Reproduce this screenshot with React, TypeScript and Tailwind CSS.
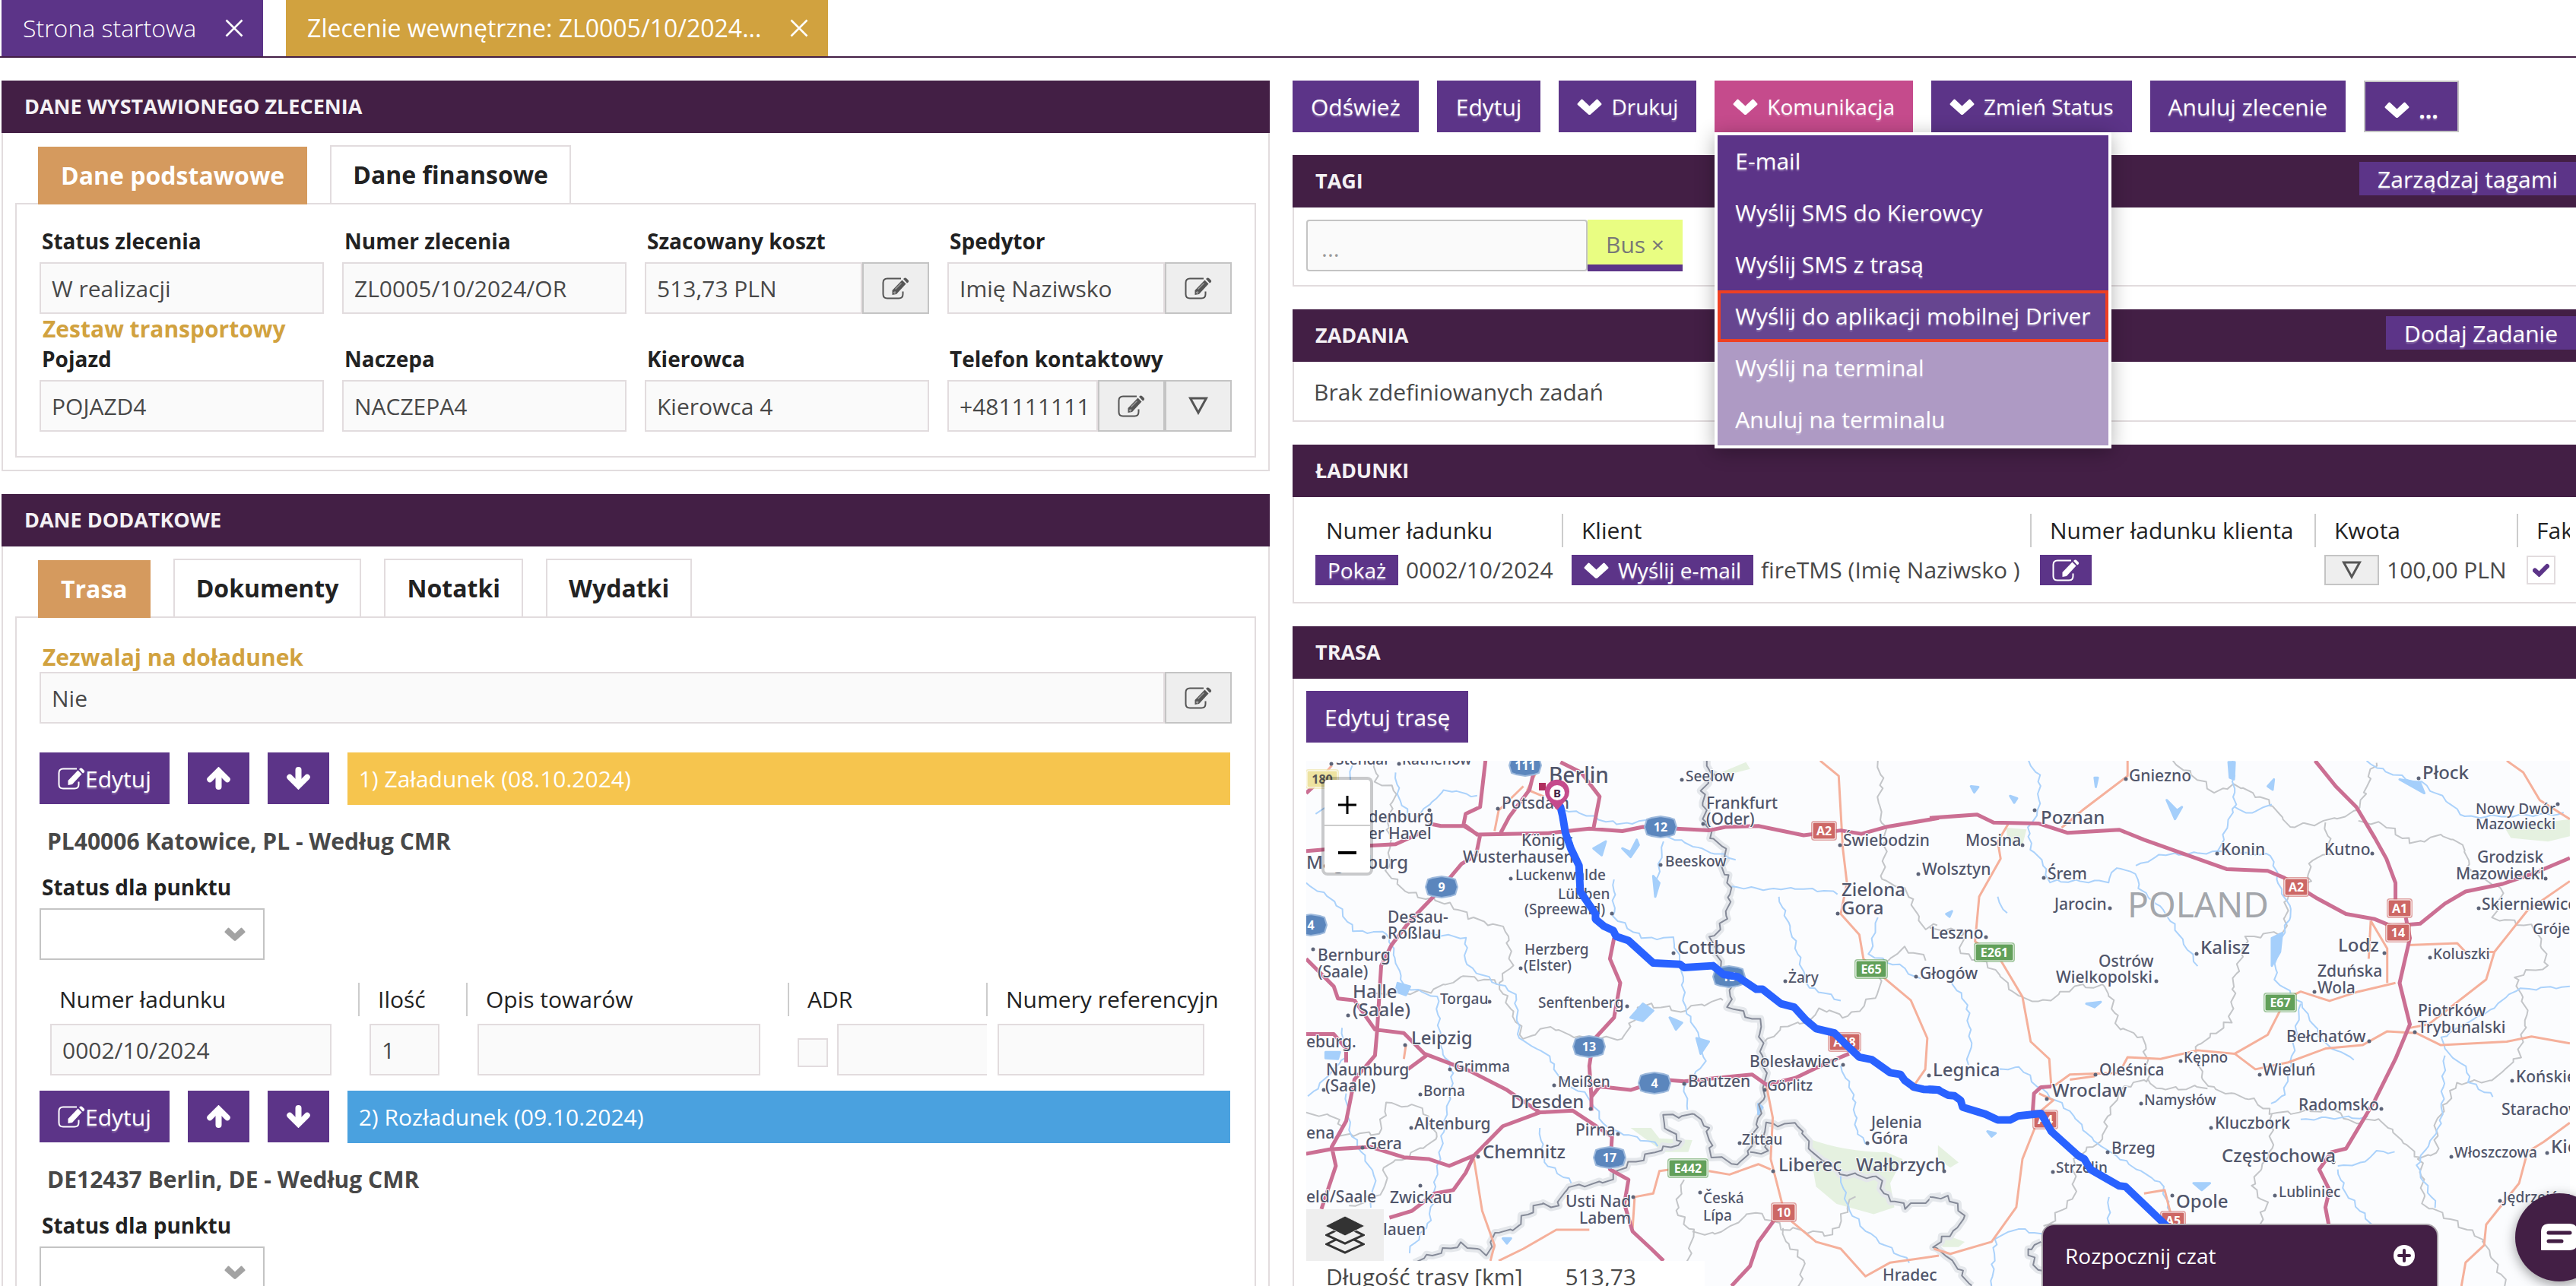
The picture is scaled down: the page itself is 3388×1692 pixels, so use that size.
import React from "react";
import clsx from "clsx";

type Point = [number, number];

/* ---------- icons ---------- */

function EditIcon({ className }: { className?: string }) {
  return (
    <svg viewBox="0 0 36 29" className={clsx("h-[29px] w-9 shrink-0", className)} fill="none" stroke="currentColor">
      <path d="M25 1.5H7Q1.5 1.5 1.5 7V22Q1.5 27.5 7 27.5H22Q27.500 27.500 27.500 22V18.500" strokeWidth="2" />
      <path d="M13.500 23V17L26.500 3.500L31.500 8.500L19 22Z" fill="currentColor" stroke="none" />
      <path d="M28 2L29.500 0.800Q31 0 32.500 1.500L34.500 3.500Q36 5 34.500 6.500L33 7.500Z" fill="currentColor" stroke="none" />
      <path d="M17.500 15.500L25.500 7.500M15 19.500L17.500 21.500" className="stroke-white/40" strokeWidth="1.500" />
      <circle cx="17" cy="19.500" r="1.500" className="fill-white/30" stroke="none" />
    </svg>
  );
}

function ChevronIcon({ className }: { className?: string }) {
  return (
    <svg viewBox="0 0 33 21" className={clsx("shrink-0", className)} fill="currentColor">
      <path d="M1 6L5.500 1Q6.500 0 7.500 1L16.500 9.500L25.500 1Q26.500 0 27.500 1L32 6Q33 7 32 8L18 20.500Q16.500 21.500 15 20.500L1 8Q0 7 1 6Z" />
    </svg>
  );
}

function ArrowIcon({ down }: { down?: boolean }) {
  return (
    <svg viewBox="0 0 31 30" className={clsx("h-[30px] w-[31px]", down && "rotate-180")} fill="none" stroke="currentColor">
      <path d="M4 16.500L15.500 5L27 16.500" strokeWidth="7.500" strokeLinecap="round" />
      <path d="M15.500 7V26" strokeWidth="8" strokeLinecap="round" />
    </svg>
  );
}

function TriangleIcon() {
  return (
    <svg viewBox="0 0 26 24" className="h-6 w-[26px]" fill="none" stroke="currentColor">
      <path d="M2.500 2H23.500L13 21Z" strokeWidth="3" />
    </svg>
  );
}

function CloseIcon() {
  return (
    <svg viewBox="0 0 24 24" className="h-6 w-6" fill="none" stroke="currentColor">
      <path d="M1.500 1.500L22.500 22.500M22.500 1.500L1.500 22.500" strokeWidth="2.500" />
    </svg>
  );
}

function LayersIcon() {
  return (
    <svg viewBox="0 0 52 50" className="h-[50px] w-[52px]">
      <path d="M26 25L2 37L26 48L50 37Z" fill="#eee" stroke="#333" strokeWidth="3" />
      <path d="M26 13L2 25L26 36L50 25Z" fill="#eee" stroke="#333" strokeWidth="3" />
      <path d="M26 0L0 13L26 26L52 13Z" fill="#333" stroke="#eee" strokeWidth="1" />
    </svg>
  );
}

/* ---------- small building blocks ---------- */

const shadow = "[text-shadow:0_2px_2px_rgba(255,255,255,0.3)]";

function PurpleButton({ children, className }: { children: React.ReactNode; className?: string }) {
  return (
    <button type="button" className={clsx("flex shrink-0 items-center whitespace-nowrap bg-[#5c3488] text-white", shadow, className)}>
      {children}
    </button>
  );
}

function GreyButton({ children, label, className }: { children: React.ReactNode; label: string; className?: string }) {
  return (
    <button
      type="button"
      aria-label={label}
      className={clsx("flex shrink-0 items-center justify-center border-2 border-[#c4c4c4] bg-[#eee] text-[#555]", className)}
    >
      {children}
    </button>
  );
}

const inputStyle = "h-[68px] min-w-0 rounded-none border-2 border-[#e2dcde] bg-[#fafafa] px-[14px] text-[30px] text-[#484848]";

function Field({ id, label, value, edit, more }: { id: string; label: string; value: string; edit?: boolean; more?: boolean }) {
  return (
    <div className="min-w-0">
      <label htmlFor={id} className="block pl-[3px] text-[28px] leading-10 font-bold text-[#222]">
        {label}
      </label>
      <div className="mt-2 flex">
        <input id={id} readOnly defaultValue={value} className={clsx(inputStyle, "w-full flex-1")} />
        {edit && (
          <GreyButton label={"Edytuj " + label} className="w-[88px]">
            <EditIcon />
          </GreyButton>
        )}
        {more && (
          <GreyButton label="Więcej" className="w-[88px]">
            <TriangleIcon />
          </GreyButton>
        )}
      </div>
    </div>
  );
}

function PanelHeader({ title, action }: { title: string; action?: string }) {
  return (
    <div className="flex h-[69px] items-center justify-between bg-[#431f45] pl-[30px]">
      <h2 className="text-[27px] font-bold text-[#f4f1f4]">{title}</h2>
      {action && <PurpleButton className="mb-[7px] h-[44px] pr-6 pl-6 text-[30px]">{action}</PurpleButton>}
    </div>
  );
}

function TabbedPanel({ title, tabs, children }: { title: string; tabs: string[]; children: React.ReactNode }) {
  return (
    <section>
      <PanelHeader title={title} />
      <div className="border-2 border-t-0 border-[#e2dcde] px-4 py-4">
        <div role="tablist" className="flex items-start gap-[30px] px-[30px]">
          {tabs.map((tab, i) => (
            <button
              key={tab}
              type="button"
              role="tab"
              aria-selected={i === 0}
              className={clsx(
                "h-[76px] text-[32px] font-bold whitespace-nowrap",
                i === 0 ? "z-10 mt-[2px] -mb-[2px] bg-[#d59a5e] px-[30px] text-white" : "border-2 border-b-0 border-[#e2dcde] bg-white px-7 text-[#222]"
              )}
            >
              {tab}
            </button>
          ))}
        </div>
        <div className="border-2 border-[#e2dcde] px-[30px] pb-8">{children}</div>
      </div>
    </section>
  );
}

function RoutePoint({ id, title, color, address }: { id: string; title: string; color: string; address: string }) {
  return (
    <div>
      <div className="flex gap-6 pr-[2px]">
        <PurpleButton className="h-[68px] px-6 text-[30px]">
          <EditIcon />
          Edytuj
        </PurpleButton>
        <PurpleButton className="h-[68px] w-[81px] justify-center">
          <ArrowIcon />
        </PurpleButton>
        <PurpleButton className="h-[68px] w-[81px] justify-center">
          <ArrowIcon down />
        </PurpleButton>
        <div className={clsx("flex h-[69px] flex-1 items-center px-[15px] text-[30px] text-white", color)}>{title}</div>
      </div>
      <p className="mt-7 pl-[10px] text-[30px] leading-10 font-bold text-[#484848]">{address}</p>
      <label htmlFor={id} className="mt-5 block pl-[3px] text-[28px] leading-10 font-bold text-[#222]">
        Status dla punktu
      </label>
      <div className="mt-2 grid w-[296px] items-center">
        <select id={id} className="col-start-1 row-start-1 h-[68px] appearance-none border-2 border-[#c4c4c4] bg-white px-4 text-[30px]">
          <option></option>
        </select>
        <ChevronIcon className="pointer-events-none col-start-1 row-start-1 mr-[25px] h-[18px] w-7 justify-self-end text-[#a3a3a3]" />
      </div>
    </div>
  );
}

/* ---------- left column ---------- */

function OrderData() {
  return (
    <TabbedPanel title="DANE WYSTAWIONEGO ZLECENIA" tabs={["Dane podstawowe", "Dane finansowe"]}>
      <div className="grid grid-cols-4 gap-x-6 pt-7">
        <Field id="status" label="Status zlecenia" value="W realizacji" />
        <Field id="number" label="Numer zlecenia" value="ZL0005/10/2024/OR" />
        <Field id="cost" label="Szacowany koszt" value="513,73 PLN" edit />
        <Field id="forwarder" label="Spedytor" value="Imię Naziwsko" edit />
        <h3 className="col-span-4 pl-1 text-[30px] leading-[39px] font-bold text-[#d1a23f]">Zestaw transportowy</h3>
        <Field id="vehicle" label="Pojazd" value="POJAZD4" />
        <Field id="trailer" label="Naczepa" value="NACZEPA4" />
        <Field id="driver" label="Kierowca" value="Kierowca 4" />
        <Field id="phone" label="Telefon kontaktowy" value="+481111111" edit more />
      </div>
    </TabbedPanel>
  );
}

function AdditionalData() {
  return (
    <TabbedPanel title="DANE DODATKOWE" tabs={["Trasa", "Dokumenty", "Notatki", "Wydatki"]}>
      <label htmlFor="groupage" className="block pt-8 pl-1 text-[30px] leading-[39px] font-bold text-[#d1a23f]">
        Zezwalaj na doładunek
      </label>
      <div className="mb-[38px] flex">
        <input id="groupage" readOnly defaultValue="Nie" className={clsx(inputStyle, "flex-1")} />
        <GreyButton label="Edytuj" className="w-[88px]">
          <EditIcon />
        </GreyButton>
      </div>
      <RoutePoint id="point-1" title="1) Załadunek (08.10.2024)" color="bg-[#f6c54e]" address="PL40006 Katowice, PL - Według CMR" />
      <div className="mt-[30px] mr-4 mb-5 overflow-hidden">
        <table className="w-full table-fixed">
          <colgroup>
            <col className="w-[420px]" />
            <col className="w-[142px]" />
            <col className="w-[423px]" />
            <col className="w-[261px]" />
            <col />
          </colgroup>
          <thead>
            <tr className="text-left text-[30px] whitespace-nowrap text-[#222]">
              {["Numer ładunku", "Ilość", "Opis towarów", "ADR", "Numery referencyjn"].map((head, i) => (
                <th key={head} className={clsx("h-11 p-0 leading-[44px] font-normal", i > 0 ? "border-l-2 border-[#ccc] pl-6" : "pl-[26px]")}>
                  {head}
                </th>
              ))}
            </tr>
          </thead>
          <tbody>
            <tr>
              <td className="p-0 pt-[10px] pl-[14px]">
                <input aria-label="Numer ładunku" readOnly defaultValue="0002/10/2024" className={clsx(inputStyle, "block w-[370px]")} />
              </td>
              <td className="p-0 pt-[10px] pl-[14px]">
                <input aria-label="Ilość" readOnly defaultValue="1" className={clsx(inputStyle, "block w-[92px]")} />
              </td>
              <td className="p-0 pt-[10px] pl-[14px]">
                <input aria-label="Opis towarów" readOnly className={clsx(inputStyle, "block w-[372px]")} />
              </td>
              <td className="overflow-hidden p-0 pt-[10px] pl-3">
                <div className="flex items-center gap-3 overflow-hidden">
                  <input type="checkbox" aria-label="ADR" className="mt-2 h-[38px] w-10 shrink-0 appearance-none border-2 border-[#e2dcde] bg-[#fafafa]" />
                  <input aria-label="Opis ADR" readOnly className={clsx(inputStyle, "w-[300px] shrink-0")} />
                </div>
              </td>
              <td className="p-0 pt-[10px] pl-[14px]">
                <input aria-label="Numery referencyjne" readOnly className={clsx(inputStyle, "block w-[272px]")} />
              </td>
            </tr>
          </tbody>
        </table>
      </div>
      <RoutePoint id="point-2" title="2) Rozładunek (09.10.2024)" color="bg-[#4aa1df]" address="DE12437 Berlin, DE - Według CMR" />
    </TabbedPanel>
  );
}

/* ---------- map ---------- */

// Shapes are kept on two survey sheets, west and east, which share one scale.
const SX = 0.5421;
const SY = 0.4541;
const WEST = -18;
const EAST = 820;

// Breaks a coarse outline up into a wavering line, as borders and rivers have.
function wander(points: Point[], amount: number) {
  let d = `M${points[0][0]} ${points[0][1]}`;
  for (let i = 1; i < points.length; i++) {
    const [x0, y0] = points[i - 1];
    const [x1, y1] = points[i];
    const steps = Math.max(1, Math.round(Math.hypot(x1 - x0, y1 - y0) / 16));
    for (let s = 1; s <= steps; s++) {
      const t = s / steps;
      const x = x0 + (x1 - x0) * t + Math.sin(s * 2.3 + i * 1.7) * amount;
      const y = y0 + (y1 - y0) * t + Math.cos(s * 1.9 + i * 2.9) * amount;
      d += `L${x.toFixed(0)} ${y.toFixed(0)}`;
    }
  }
  return d;
}

type Sheet = { borders: Point[][]; regions: Point[][]; rivers: Point[][]; lakes: string; woods: string; motorways: string; roads: string; route: string };

const west: Sheet = {
  borders: [
    [[1005, 46], [1020, 90], [995, 130], [1000, 210], [1015, 265], [1050, 300], [1045, 370], [1065, 410], [1050, 510], [1015, 560], [1040, 640], [1065, 690], [1060, 760], [1130, 800], [1140, 900], [1150, 980], [1130, 1080], [1110, 1180], [1080, 1215], [1020, 1190], [1005, 1110], [980, 1075], [905, 1075], [905, 1110], [945, 1150], [890, 1175], [790, 1230], [770, 1265], [660, 1285], [640, 1340], [600, 1330], [560, 1370], [540, 1410], [490, 1410], [475, 1475], [410, 1445], [300, 1495]],
    [[1110, 1180], [1150, 1180], [1145, 1100], [1230, 1100], [1260, 1180], [1330, 1240], [1420, 1255], [1440, 1310], [1490, 1340], [1568, 1310]],
  ],
  regions: [
    [[200, 46], [205, 110], [250, 130], [230, 220], [240, 300], [230, 370], [280, 430], [380, 460], [430, 500], [520, 535], [530, 640], [500, 690], [540, 790], [560, 850], [620, 820], [700, 850], [800, 850], [850, 750], [940, 770], [1050, 735]],
    [[200, 720], [330, 715], [420, 670], [500, 690]],
    [[33, 1065], [110, 1080], [120, 1130], [210, 1125], [230, 1040], [310, 1050], [355, 1140], [280, 1190], [225, 1220], [225, 1290], [140, 1340]],
    [[1145, 860], [1190, 820], [1250, 800], [1280, 765], [1350, 790], [1420, 720], [1430, 640], [1480, 590], [1540, 620]],
    [[1420, 46], [1430, 100], [1420, 180], [1440, 260], [1430, 390], [1490, 420], [1530, 530], [1568, 520]],
    [[950, 1260], [930, 1350], [970, 1410], [960, 1495]],
    [[970, 1410], [1030, 1420], [1120, 1350], [1190, 1400], [1310, 1420], [1360, 1310]],
    [[1190, 1400], [1200, 1450], [1240, 1490], [1230, 1568]],
  ],
  rivers: [
    [[145, 60], [135, 130], [60, 200]],
    [[250, 80], [260, 160], [290, 220], [370, 130], [450, 150]],
    [[33, 400], [100, 450], [150, 540], [230, 545], [250, 620], [270, 700], [350, 730], [360, 880], [390, 950], [370, 1090], [330, 1390], [280, 1470]],
    [[330, 545], [420, 560], [420, 640], [540, 720], [550, 850], [620, 900], [650, 970], [720, 1020], [760, 1110], [890, 1160]],
    [[780, 390], [780, 500], [850, 560], [920, 560], [945, 640], [950, 760], [990, 850], [1000, 920], [950, 990], [960, 1060]],
    [[640, 180], [700, 200], [790, 230], [860, 220]],
    [[900, 260], [1010, 310], [1075, 330]],
    [[900, 280], [880, 430]],
    [[1065, 410], [1170, 420], [1240, 415], [1325, 430]],
    [[1180, 440], [1210, 540], [1250, 700], [1330, 740]],
    [[1420, 500], [1400, 610], [1470, 640], [1520, 680]],
    [[120, 820], [130, 900], [40, 1020]],
    [[130, 1010], [140, 1120], [200, 1250], [190, 1340]],
    [[600, 1110], [610, 1210], [680, 1270]],
    [[1330, 930], [1360, 1010], [1370, 1130], [1400, 1160]],
    [[1330, 1250], [1350, 1350], [1400, 1420], [1500, 1500]],
  ],
  lakes:
    "M820 790L850 750L875 770L850 800ZM980 850L1010 860L990 895ZM730 300L760 280L750 320ZM800 300L820 310L835 275L840 290L820 325ZM875 380L890 400L880 440ZM255 690L285 700L275 725L250 715ZM80 890L115 890L110 910L80 908ZM915 790L945 805L930 825ZM1130 1040L1140 1050L1130 1070ZM510 1430L530 1430L520 1445Z",
  woods: "M1250 1140Q1340 1180 1440 1180L1480 1200L1450 1270L1460 1340L1410 1360L1320 1330L1270 1280ZM820 1110L870 1110L890 1140L970 1145L960 1180L900 1180ZM1040 80L1100 50L1110 70L1060 85Z",
  motorways:
    "M33 308L190 292L250 288L320 250M330 228L360 235L415 235L450 260L620 256L720 243L800 250L850 238L1010 248L1050 238L1130 235L1240 262L1330 248L1380 258L1440 238L1568 212M450 262L415 230L420 200L455 180L468 46M505 255L525 210L575 130L585 80M730 243L745 150L700 80L650 50M455 262L445 320L410 345L350 430L285 510L240 580L215 640L205 830L200 900L150 970L130 1090L95 1165L105 1220L70 1345M33 1185L90 1172L190 1165L270 1195L330 1200L380 1220L440 1190L510 1105L600 1065L680 1060L775 1135L770 1230L815 1260L805 1330L825 1410L870 1460L900 1495M725 1060L725 1020L745 990L820 1000L900 970L950 975L1115 955L1150 985L1220 965L1290 925L1350 895M33 620L100 700L110 735L150 740L200 825L270 835L320 895L430 945L520 1000L600 1065M33 838L100 838L130 880L130 920M280 940L325 900M780 560L770 620L795 690L780 790L730 855L720 930L725 1020M440 1190L420 1240L390 1290L345 1300L290 1350L235 1370M1170 1375L1130 1440L1110 1510L1065 1568M33 140L60 110",
  roads:
    "M1280 46L1325 90L1335 300L1345 400L1330 490L1375 550L1385 620L1440 680L1500 740L1540 850L1535 940L1500 1000M1150 990L1165 1080L1160 1200L1190 1340M440 1200L460 1350L490 1450L480 1495M1010 1235L1060 1245L1130 1215L1160 1230M500 1495L560 1460L640 1405L720 1405M920 1230L890 1235L875 1300L830 1310L825 1400M1210 1380L1270 1440L1330 1460L1390 1540L1450 1500L1568 1480M595 70L570 130L610 150M490 250L500 190L560 120M275 870L270 910M60 110L95 60",
  route:
    "M650 180L655 205L662 255L675 300L695 350L698 425L735 490L735 505L755 525L778 538L785 555L815 567L875 632L940 636L950 645L1020 640L1045 665L1080 672L1125 708L1140 708L1185 750L1217 760L1245 797L1270 822L1315 835L1340 865L1375 905L1405 912L1450 950L1475 955L1485 972L1508 992L1530 998L1568 1000",
};

const east: Sheet = {
  borders: [
    [[0, 1310], [40, 1310], [85, 1360], [60, 1410], [10, 1450], [60, 1500], [100, 1568]],
    [[270, 1440], [235, 1465], [270, 1530]],
  ],
  regions: [
    [[590, 46], [640, 90], [690, 135], [740, 115], [830, 170], [870, 235], [960, 225], [1040, 190], [1070, 90], [1085, 46]],
    [[1040, 220], [1100, 230], [1170, 285], [1250, 260], [1300, 300], [1310, 360], [1390, 420], [1370, 500], [1470, 530], [1500, 640], [1420, 670], [1450, 780], [1430, 900], [1370, 970], [1280, 980], [1230, 1090], [1230, 1180], [1190, 1200], [1200, 1330], [1340, 1430], [1400, 1568]],
    [[960, 225], [975, 310], [920, 340], [920, 400], [870, 400], [860, 540], [770, 560], [740, 680], [730, 800], [640, 880], [670, 990], [790, 1030], [830, 1070], [980, 1055], [1030, 1100], [1090, 1080], [1190, 1200]],
    [[0, 530], [80, 540], [75, 600], [160, 650], [210, 730], [280, 745], [350, 700], [430, 700], [460, 820], [520, 850], [530, 970], [470, 990], [430, 1080], [420, 1140], [350, 1200], [350, 1310], [280, 1400]],
    [[830, 1070], [830, 1170], [780, 1280], [815, 1330], [800, 1390]],
    [[530, 970], [560, 1000], [670, 990]],
  ],
  rivers: [
    [[240, 46], [265, 90], [265, 190], [240, 240], [245, 300], [270, 330], [290, 395], [430, 395], [450, 360], [500, 370], [510, 420], [570, 480], [620, 580], [650, 640]],
    [[500, 350], [560, 320], [700, 310], [830, 320], [850, 420], [880, 480], [840, 600], [840, 680], [900, 750], [960, 870], [1030, 910]],
    [[735, 46], [740, 170], [715, 260], [700, 310]],
    [[1060, 46], [1110, 80], [1190, 110], [1240, 150], [1300, 210], [1400, 205], [1540, 200]],
    [[740, 180], [780, 200], [830, 170]],
    [[50, 680], [90, 750], [100, 860], [90, 930]],
    [[160, 940], [220, 935], [270, 1000], [340, 1060], [390, 1140], [450, 1190], [560, 1270], [590, 1370]],
    [[900, 750], [880, 900], [860, 1010], [830, 1040]],
    [[1553, 700], [1420, 710], [1370, 760], [1240, 850], [1260, 900], [1300, 930], [1310, 980], [1370, 1020]],
    [[1250, 900], [1240, 1100], [1180, 1220], [1230, 1340]],
    [[990, 1220], [1060, 1210], [1080, 1180], [1130, 1180]],
    [[990, 1230], [1010, 1300], [1070, 1385]],
    [[435, 1310], [435, 1390]],
    [[150, 1568], [160, 1430], [215, 1400], [270, 1420]],
    [[900, 1085], [980, 1080], [1060, 1080]],
    [[165, 440], [185, 490]],
  ],
  lakes:
    "M725 50L740 50L738 100L728 95ZM830 560L855 545L850 600L830 640ZM1140 100L1190 110L1200 140ZM640 1270L680 1270L660 1290ZM380 750L415 745L400 760ZM140 1120L160 1125L150 1135ZM575 160L600 190L612 180L595 215ZM400 95L408 95L403 122ZM100 120L118 122L108 138ZM195 148L212 155L205 168ZM820 120L835 100L832 130ZM40 490L54 482L48 498Z",
  woods: "M1395 240L1553 215V265L1500 280L1410 270ZM20 1160L70 1210L50 1225L20 1200ZM40 1420L85 1440L70 1455L30 1455ZM185 240L235 245L225 290L190 280Z",
  motorways:
    "M0 212L115 202L155 225L265 228L335 255L460 246L520 275L720 360L820 365L860 385L940 445L1010 490L1080 505L1120 525L1190 518L1250 460L1300 425L1390 403L1470 370L1553 328M935 46L985 120L1035 180L1080 270L1108 330L1130 400V450M1155 500L1165 560L1140 690L1165 810L1130 910L1080 1030L1010 1170L975 1180L945 1230L970 1290L960 1340L968 1390M295 990L270 992L253 1010L250 1060L270 1085",
  roads:
    "M480 46L480 90L370 190L320 240M190 230L165 280L172 330L120 440L110 570L170 620L225 730L245 860L290 910L295 990M255 1110L225 1200L210 1340L150 1440L50 1475L10 1460M300 990L340 955L460 950L480 905L560 910L650 885L740 895L820 840L850 770M740 895L790 940L870 920L960 880L1050 870L1110 830L1180 835L1240 870L1400 860L1460 845L1553 865M855 740L900 715L970 742L1040 715L1130 690M1070 510L1110 590L1110 650L1110 690M1070 510L1065 620M1160 580L1280 575L1300 600L1370 600L1450 480L1553 395M1370 600L1350 680L1210 810L1165 820M1400 46L1440 80L1480 160L1553 215M1553 1095L1490 1150L1450 1180L1430 1270L1350 1390L1345 1450L1300 1500L1290 1568M520 1300L570 1290L585 1360M340 970L400 960M265 1010L300 1030L270 1060",
  route:
    "M0 998L20 1000L45 1015L60 1017L75 1030L80 1050L135 1070L165 1087L195 1087L215 1075L270 1068L295 1120L360 1190L375 1200L390 1230L460 1278L475 1280L580 1400",
};

const westTowns: [string, number, number, string?][] = [
  ["Stendal", 105, 58], ["Rathenow", 266, 58], ["Berlin", 622, 110, "xl"], ["Seelow", 953, 105], ["Frankfurt", 1003, 186, "m"], ["(Oder)", 1003, 232, "m"],
  ["Potsdam", 508, 186, "m"], ["Brandenburg", 96, 224, "m"], ["an der Havel", 104, 272, "m"], ["Magdeburg", 33, 360, "l"], ["Königs", 555, 293, "m"],
  ["Wusterhausen", 414, 342, "m"], ["Luckenwalde", 540, 392], ["Lübben", 643, 448], ["(Spreewald)", 563, 492], ["Beeskow", 903, 352],
  ["Świebodzin", 1336, 293, "m"], ["Dessau-", 230, 515, "m"], ["Roßlau", 230, 562, "m"], ["Bernburg", 60, 625, "m"], ["(Saale)", 60, 673, "m"],
  ["Halle", 146, 733, "l"], ["(Saale)", 146, 787, "l"], ["Leipzig", 288, 868, "l"], ["eburg.", 33, 876, "m"], ["Naumburg", 82, 957, "m"],
  ["(Saale)", 80, 1004, "m"], ["Torgau", 357, 750], ["Herzberg", 562, 608], ["(Elster)", 560, 653], ["Senftenberg", 595, 762], ["Grimma", 391, 946],
  ["Meißen", 643, 990], ["Bautzen", 960, 990, "m"], ["Görlitz", 1152, 1003], ["Bolesławiec", 1109, 934, "m"], ["Dresden", 530, 1052, "l"],
  ["Borna", 317, 1018], ["Altenburg", 296, 1114, "m"], ["Pirna", 687, 1132, "m"], ["Gera", 178, 1172, "m"], ["ena", 33, 1140, "m"],
  ["Chemnitz", 462, 1197, "l"], ["Zittau", 1091, 1158], ["Liberec", 1178, 1235, "l"], ["Wałbrzych", 1366, 1235, "l"], ["Jelenia", 1403, 1110, "m"],
  ["Góra", 1403, 1157, "m"], ["eld/Saale", 33, 1325, "m"], ["Zwickau", 236, 1327, "m"], ["Usti Nad", 662, 1340, "m"], ["Labem", 695, 1388, "m"],
  ["Česká", 997, 1328], ["Lípa", 997, 1378], ["lauen", 219, 1420, "m"], ["Hradec", 1432, 1553, "m"], ["Żary", 1203, 690], ["Cottbus", 934, 606, "l"],
  ["Zielona", 1332, 438, "l"], ["Gora", 1332, 490, "l"],
];

const eastTowns: [string, number, number, string?][] = [
  ["Gniezno", 484, 105, "m"], ["Poznan", 269, 228, "l"], ["Mosina", 87, 293, "m"], ["Wolsztyn", -18, 376, "m"], ["Śrem", 286, 390, "m"],
  ["Jarocin", 303, 478, "m"], ["Leszno", 2, 562, "m"], ["Głogów", -24, 678, "m"], ["Konin", 707, 320, "m"], ["Kutno", 957, 320, "m"],
  ["Płock", 1196, 98, "l"], ["Nowy Dwór", 1325, 200], ["Mazowiecki", 1325, 245], ["Grodzisk", 1328, 342, "m"], ["Mazowiecki", 1277, 390, "m"],
  ["Skierniewice", 1339, 478, "m"], ["Grójec", 1462, 548], ["POLAND", 480, 500, "country"], ["Lodz", 990, 600, "l"], ["Kalisz", 657, 605, "l"],
  ["Ostrów", 410, 642, "m"], ["Wielkopolski", 306, 690, "m"], ["Koluszki", 1222, 620], ["Zduńska", 940, 672, "m"], ["Wola", 940, 720, "m"],
  ["Piotrków", 1185, 787, "m"], ["Trybunalski", 1185, 835, "m"], ["Bełchatów", 865, 862, "m"], ["Kępno", 617, 920], ["Wieluń", 808, 958, "m"],
  ["Oleśnica", 411, 958, "m"], ["Legnica", 8, 960, "l"], ["Wroclaw", 297, 1020, "l"], ["Namysłów", 521, 1043], ["Radomsko", 894, 1060, "m"],
  ["Kluczbork", 691, 1112, "m"], ["Końskie", 1422, 977, "m"], ["Starachowice", 1388, 1072, "m"], ["Brzeg", 440, 1185, "m"],
  ["Częstochowa", 709, 1208, "l"], ["Strzelin", 306, 1240], ["Włoszczowa", 1272, 1195], ["Kielce", 1507, 1182, "l"], ["Lubliniec", 846, 1310],
  ["Opole", 598, 1342, "l"], ["Jędrzejów", 1390, 1325],
];

const westDots: Point[] = [[95, 58], [258, 58], [944, 103], [996, 232], [498, 188], [332, 192], [530, 390], [775, 490], [893, 350], [1328, 292], [222, 560], [50, 595], [135, 787], [273, 873], [75, 1003], [478, 746], [554, 650], [812, 760], [382, 942], [635, 988], [950, 985], [1145, 1003], [1335, 930], [723, 1058], [309, 1016], [288, 1112], [790, 1130], [169, 1170], [451, 1196], [1084, 1157], [1166, 1237], [1394, 1156], [310, 1280], [826, 1312], [989, 1300], [1196, 688], [924, 606], [1322, 492], [1519, 376], [1544, 960], [1512, 674]];
const eastDots: Point[] = [[476, 102], [255, 192], [225, 292], [277, 388], [438, 476], [137, 560], [698, 318], [1074, 318], [1186, 100], [1524, 175], [1495, 390], [1332, 476], [1103, 606], [647, 607], [550, 688], [1214, 618], [933, 718], [1176, 834], [1066, 860], [609, 918], [800, 957], [402, 957], [285, 1028], [513, 1042], [1095, 1058], [683, 1112], [1413, 976], [432, 1183], [980, 1212], [299, 1240], [1265, 1195], [1497, 1184], [838, 1309], [588, 1308], [1384, 1324], [35, 1238]];

const westSigns: [string, number, number, string][] = [
  ["180", 72, 98, "yellow"], ["111", 565, 60, "blue"], ["12", 892, 237, "blue"], ["9", 362, 412, "blue"], ["4", 45, 522, "blue"], ["13", 719, 875, "blue"],
  ["4", 878, 980, "blue"], ["17", 770, 1195, "blue"], ["15", 1058, 672, "blue"], ["A2", 1290, 248, "red"], ["A18", 1340, 862, "red"],
  ["10", 1191, 1355, "red"], ["E65", 1404, 650, "green"], ["E442", 960, 1226, "green"],
];
const eastSigns: [string, number, number, string][] = [
  ["A2", 890, 412, "red"], ["A1", 1140, 473, "red"], ["14", 1137, 543, "red"], ["A4", 280, 1085, "red"], ["A5", 590, 1378, "red"],
  ["E261", 157, 601, "green"], ["E67", 850, 747, "green"],
];

const townSizes: Record<string, string> = {
  s: "text-[19px]",
  m: "text-[21px]",
  l: "text-[24px]",
  xl: "text-[28px]",
  country: "text-[46px] fill-[#a3a6ab]",
};
const signFill: Record<string, string> = { blue: "#5b86bd", red: "#cd6765", green: "#62a05a", yellow: "#eee3a0" };

function SheetShapes({ sheet, offset }: { sheet: Sheet; offset: number }) {
  return (
    <g transform={`translate(${offset} -21) scale(${SX} ${SY})`} fill="none" strokeLinejoin="round" className="[&_path]:[vector-effect:non-scaling-stroke]">
      <path d={sheet.woods} fill="#e5f1e0" />
      {sheet.borders.map((line, i) => (
        <path key={i} d={wander(line, 6)} stroke="#e4e7eb" strokeWidth="10" />
      ))}
      {sheet.regions.map((line, i) => (
        <path key={i} d={wander(line, 6)} stroke="#c3c5c8" strokeWidth="2" />
      ))}
      {sheet.rivers.map((line, i) => (
        <path key={i} d={wander(line, 4)} stroke="#abd2fb" strokeWidth="2" />
      ))}
      <path d={sheet.lakes} fill="#a5cffb" stroke="#a5cffb" strokeWidth="3" />
      {sheet.borders.map((line, i) => (
        <path key={i} d={wander(line, 6)} stroke="#858a98" strokeWidth="2" />
      ))}
      <path d={sheet.roads} stroke="#f5b09b" strokeWidth="3" />
      <path d={sheet.motorways} stroke="#cb6f93" strokeWidth="5" />
    </g>
  );
}

function Towns({ towns, dots, offset }: { towns: [string, number, number, string?][]; dots: Point[]; offset: number }) {
  return (
    <g>
      {dots.map(([x, y], i) => (
        <circle key={i} cx={Math.round(x * SX + offset)} cy={Math.round(y * SY - 22)} r="2.500" fill="#5d6478" />
      ))}
      {towns.map(([name, x, y, size]) => (
        <text
          key={name + y}
          x={Math.round(x * SX + offset)}
          y={Math.round(y * SY - 21)}
          className={clsx(size !== "country" && "fill-[#50556a] font-medium", townSizes[size ?? "s"])}
          stroke="#fbfcfe"
          strokeWidth="2"
          paintOrder="stroke"
        >
          {name}
        </text>
      ))}
    </g>
  );
}

function Signs({ signs, offset }: { signs: [string, number, number, string][]; offset: number }) {
  return (
    <g>
      {signs.map(([name, x, y, kind]) => {
        const w = kind === "blue" ? 38 : name.length * 10 + 10;
        return (
          <g key={name + x} transform={`translate(${Math.round(x * SX + offset)} ${Math.round(y * SY - 21)})`}>
            {kind === "blue" ? (
              <path d="M-21 0L-18 -10L-12 -12L0 -14L12 -12L18 -10L21 0L18 10L12 12L0 14L-12 12L-18 10Z" fill="#5b86bd" stroke="#9db9dc" strokeWidth="2" />
            ) : (
              <>
                <rect x={-w / 2 - 2} y="-13" width={w + 4} height="26" rx="4" fill={signFill[kind]} opacity="0.6" />
                <rect x={-w / 2} y="-11" width={w} height="22" rx="2" fill={signFill[kind]} stroke="#fff" strokeWidth="1" />
              </>
            )}
            <text y="6" textAnchor="middle" className={clsx("text-[16px] font-bold", kind === "yellow" ? "fill-[#555]" : "fill-white")}>
              {name}
            </text>
          </g>
        );
      })}
    </g>
  );
}

function RouteMap() {
  return (
    <div className="relative mt-6 h-[720px] overflow-hidden bg-[#fbfcfe]">
      <svg role="img" aria-label="Mapa trasy" viewBox="0 0 1662 720" preserveAspectRatio="xMinYMin slice" className="h-full w-full font-['Noto_Sans',sans-serif]">
        <SheetShapes sheet={west} offset={WEST} />
        <SheetShapes sheet={east} offset={EAST} />
        <Signs signs={westSigns} offset={WEST} />
        <Signs signs={eastSigns} offset={EAST} />
        <rect x="306" y="29" width="9" height="10" fill="#b03060" />
        <Towns towns={westTowns} dots={westDots} offset={WEST} />
        <Towns towns={eastTowns} dots={eastDots} offset={EAST} />
        {[west, east].map((sheet, i) => (
          <g key={i} transform={`translate(${i ? EAST : WEST} -21) scale(${SX} ${SY})`}>
            <path d={sheet.route} fill="none" stroke="#2962ff" strokeWidth="10" strokeLinejoin="round" strokeLinecap="round" vectorEffect="non-scaling-stroke" />
          </g>
        ))}
        {/* destination pin */}
        <g transform="translate(330 43)">
          <path d="M0 22L-13 7A16 16 0 1 1 13 7Z" fill="#c54b8c" />
          <circle cy="-1" r="10" fill="#fff" />
          <text y="5" textAnchor="middle" className="fill-[#431f45] text-[15px] font-bold">
            B
          </text>
        </g>
      </svg>
      <div className="absolute top-[21px] left-[20px] flex w-[68px] flex-col rounded-lg border-4 border-black/20 bg-white bg-clip-padding text-black">
        <button type="button" aria-label="Przybliż" className="flex h-[61px] items-center justify-center border-b-2 border-[#ccc] pt-[6px]">
          <svg viewBox="0 0 24 24" className="h-6 w-6" stroke="currentColor" strokeWidth="3">
            <path d="M12 0V24M0 12H24" />
          </svg>
        </button>
        <button type="button" aria-label="Oddal" className="flex h-[61px] items-center justify-center pt-[6px]">
          <svg viewBox="0 0 24 24" className="h-6 w-6" stroke="currentColor" strokeWidth="4">
            <path d="M0 13H24" />
          </svg>
        </button>
      </div>
      <div className="absolute top-[590px] left-0">
        <button type="button" aria-label="Warstwy" className="flex h-[68px] w-[102px] items-center justify-center bg-[#eee]">
          <LayersIcon />
        </button>
        <dl className="flex h-20 w-[524px] gap-14 bg-white pl-[26px] text-[30px] leading-[42px] text-[#484848]">
          <dt>Długość trasy [km]</dt>
          <dd>513,73</dd>
        </dl>
      </div>
    </div>
  );
}

/* ---------- right column ---------- */

function MenuButton({ children, className }: { children: React.ReactNode; className?: string }) {
  return (
    <PurpleButton className={clsx("h-[68px] gap-3 px-6 text-[28px]", className)}>
      <ChevronIcon className="h-[21px] w-[33px]" />
      {children}
    </PurpleButton>
  );
}

const menuItems = ["E-mail", "Wyślij SMS do Kierowcy", "Wyślij SMS z trasą", "Wyślij do aplikacji mobilnej Driver", "Wyślij na terminal", "Anuluj na terminalu"];

function Toolbar() {
  return (
    <div className="mb-[30px] flex gap-6">
      <PurpleButton className="h-[68px] px-6 text-[30px]">Odśwież</PurpleButton>
      <PurpleButton className="h-[68px] px-[25px] text-[30px]">Edytuj</PurpleButton>
      <MenuButton>Drukuj</MenuButton>
      <div className="relative">
        <MenuButton className="bg-[#c54b8c]!">Komunikacja</MenuButton>
        <ul role="menu" className="absolute top-full left-0 z-20 border-4 border-white bg-[#5c3488] shadow-[0_4px_24px_rgba(0,0,0,0.3)]">
          {menuItems.map((item, i) => (
            <li key={item} role="none">
              <button
                type="button"
                role="menuitem"
                disabled={i > 3}
                className={clsx(
                  "flex h-[68px] w-full items-center border-4 px-[19px] pb-[2px] text-[30px] whitespace-nowrap text-white",
                  shadow,
                  i < 3 && "border-transparent",
                  i === 3 && "border-[#ee4023] bg-[#664590]",
                  i > 3 && "border-transparent bg-white/50"
                )}
              >
                {item}
              </button>
            </li>
          ))}
        </ul>
      </div>
      <MenuButton>Zmień Status</MenuButton>
      <PurpleButton className="h-[68px] px-6 text-[30px]">Anuluj zlecenie</PurpleButton>
      <PurpleButton className="h-[68px] gap-3 border-2 border-[#c4c4c4] px-[25px] pt-2 text-[30px] font-bold">
        <ChevronIcon className="h-[21px] w-[33px]" />
        ...
      </PurpleButton>
    </div>
  );
}

function Panel({ title, action, className, children }: { title: string; action?: string; className?: string; children: React.ReactNode }) {
  return (
    <section className="mb-[30px]">
      <PanelHeader title={title} action={action} />
      <div className={clsx("border-b-2 border-l-2 border-[#e2dcde] pr-2", className)}>{children}</div>
    </section>
  );
}

function Loads() {
  const cell = "p-0 pt-[10px] pl-3";
  return (
    <Panel title="ŁADUNKI" className="overflow-hidden py-[22px] pl-4">
      <table className="w-full table-fixed whitespace-nowrap">
        <colgroup>
          <col className="w-[337px]" />
          <col className="w-[616px]" />
          <col className="w-[374px]" />
          <col className="w-[266px]" />
          <col />
        </colgroup>
        <thead>
          <tr className="text-left text-[30px] text-[#222]">
            {["Numer ładunku", "Klient", "Numer ładunku klienta", "Kwota", "Faktura"].map((head, i) => (
              <th key={head} className={clsx("overflow-hidden p-0 leading-[44px] font-normal", i > 0 ? "border-l-2 border-[#ccc] pl-6" : "pl-[26px]")}>
                {head}
              </th>
            ))}
          </tr>
        </thead>
        <tbody className="text-[30px] text-[#484848]">
          <tr>
            <td className={cell}>
              <div className="flex items-center gap-[10px]">
                <PurpleButton className="h-10 px-4 text-[28px]">Pokaż</PurpleButton>
                <span className="leading-10">0002/10/2024</span>
              </div>
            </td>
            <td className={cell}>
              <div className="flex items-center gap-[10px]">
                <PurpleButton className="h-10 gap-3 px-4 text-[28px]">
                  <ChevronIcon className="h-[21px] w-[33px]" />
                  Wyślij e-mail
                </PurpleButton>
                <span className="leading-10">fireTMS (Imię Naziwsko )</span>
              </div>
            </td>
            <td className={cell}>
              <PurpleButton className="h-10 w-[68px] justify-center">
                <EditIcon />
              </PurpleButton>
            </td>
            <td className={cell}>
              <div className="flex items-center gap-[10px]">
                <GreyButton label="Rozwiń" className="h-10 w-[72px]">
                  <TriangleIcon />
                </GreyButton>
                <span className="leading-10">100,00 PLN</span>
              </div>
            </td>
            <td className={cell}>
              <span className="grid h-[38px] w-[38px]">
                <input type="checkbox" aria-label="Faktura" defaultChecked className="col-start-1 row-start-1 appearance-none border-2 border-[#e2dcde] bg-white" />
                <svg viewBox="0 0 22 18" className="pointer-events-none col-start-1 row-start-1 h-[18px] w-[22px] place-self-center" fill="none" stroke="#5c3488">
                  <path d="M3 9.500L8.500 14.500L19 4" strokeWidth="6" strokeLinecap="round" />
                </svg>
              </span>
            </td>
          </tr>
        </tbody>
      </table>
    </Panel>
  );
}

function Chat() {
  return (
    <>
      <button
        type="button"
        className="fixed right-[181px] bottom-0 flex h-[82px] w-[522px] items-center justify-between rounded-t-2xl border-2 border-b-0 border-[#a9a3aa] bg-[#431f45] px-[29px] text-[28px] text-white"
      >
        Rozpocznij czat
        <svg viewBox="0 0 28 28" className="h-7 w-7">
          <circle cx="14" cy="14" r="14" fill="#fff" />
          <path d="M14 7V21M7 14H21" stroke="#431f45" strokeWidth="4" strokeLinecap="round" />
        </svg>
      </button>
      <button
        type="button"
        aria-label="Wiadomości"
        className="fixed -right-9 bottom-[6px] flex h-[116px] w-[116px] items-center justify-center rounded-full bg-[#431f45] shadow-[0_4px_16px_rgba(0,0,0,0.4)]"
      >
        <svg viewBox="0 0 48 36" className="h-9 w-12">
          <path d="M0 34V11Q0 0 11 0H37Q48 0 48 11V24Q48 35 37 35H1Q0 35 0 34Z" fill="#fff" />
          <path d="M10 12H38M10 23H27" stroke="#431f45" strokeWidth="5" strokeLinecap="round" />
        </svg>
      </button>
    </>
  );
}

function App() {
  return (
    <div className="h-screen overflow-hidden bg-white font-['Open_Sans','Noto_Sans',sans-serif]">
      <nav className="flex h-[76px] gap-[30px] border-b-2 border-[#431f45] pl-[2px] text-[32px] text-white">
        <div className="flex items-center gap-[38px] bg-[#5c3488] pr-[26px] pl-7">
          <a href="#" className="font-light">
            Strona startowa
          </a>
          <button type="button" aria-label="Zamknij">
            <CloseIcon />
          </button>
        </div>
        <div className="flex items-center gap-[38px] bg-[#d1a23f] pr-[26px] pl-7">
          <a href="#">Zlecenie wewnętrzne: ZL0005/10/2024...</a>
          <button type="button" aria-label="Zamknij">
            <CloseIcon />
          </button>
        </div>
      </nav>

      <main className="grid grid-cols-[1668fr_1688fr] gap-[30px] pt-[30px] pl-[2px]">
        <div className="flex min-w-0 flex-col gap-[30px]">
          <OrderData />
          <AdditionalData />
        </div>
        <div className="min-w-0">
          <Toolbar />
          <Panel title="TAGI" action="Zarządzaj tagami" className="flex pt-4 pb-[18px] pl-4">
            <input aria-label="Tagi" placeholder="..." className="h-[68px] w-[370px] rounded border-2 border-[#c4c4c4] bg-[#fafafa] px-[18px] pt-[6px] text-[30px] placeholder:text-[#999]" />
            <button type="button" className="h-[68px] border-b-[9px] border-[#5c3488] bg-[#e9fd82] px-6 pt-[6px] text-[30px] text-[#777]">
              Bus ×
            </button>
          </Panel>
          <Panel title="ZADANIA" action="Dodaj Zadanie" className="pt-5 pb-[17px] pl-[26px]">
            <p className="text-[30px] leading-10 text-[#484848]">Brak zdefiniowanych zadań</p>
          </Panel>
          <Loads />
          <Panel title="TRASA" className="pt-4 pl-4">
            <PurpleButton className="h-[68px] px-6 text-[30px]">Edytuj trasę</PurpleButton>
            <RouteMap />
          </Panel>
        </div>
      </main>
      <Chat />
    </div>
  );
}

export default App;
